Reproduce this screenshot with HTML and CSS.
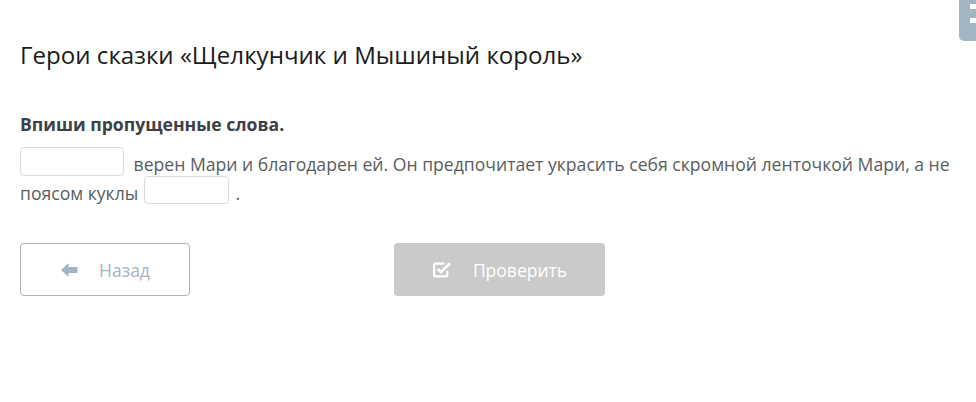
FILE: index.html
```html
<!DOCTYPE html>
<html lang="ru">
<head>
<meta charset="utf-8">
<link rel="stylesheet" href="styles.css">
</head>
<body>
<div class="side-tab"><span class="bar"></span><span class="bar"></span></div>
<main class="page">
  <h1 class="title">Герои сказки «Щелкунчик и Мышиный король»</h1>
  <p class="task">Впиши пропущенные слова.</p>
  <p class="text"><span class="gap gap-1"></span> верен Мари и благодарен ей. Он предпочитает украсить себя скромной ленточкой Мари, а не поясом куклы <span class="gap gap-2"></span> .</p>
  <div class="actions">
    <button class="btn btn-back" type="button">
      <svg class="icon" width="18" height="14" viewBox="0 0 18 14"><path d="M8 1 L1.5 7 L8 13 L8 9.5 L17 9.5 L17 4.5 L8 4.5 Z" fill="#a3b4c2" stroke="#a3b4c2" stroke-width="1" stroke-linejoin="round"/></svg>
      <span>Назад</span>
    </button>
    <button class="btn btn-check" type="button">
      <svg class="icon" width="20" height="17" viewBox="0 0 19 16"><path d="M12 2.5 H3.5 a1.5 1.5 0 0 0 -1.5 1.5 V13 a1.5 1.5 0 0 0 1.5 1.5 H13 a1.5 1.5 0 0 0 1.5 -1.5 V9.5" fill="none" stroke="#fff" stroke-width="2.2"/><path d="M5.5 7.5 L8.5 10.5 L17 2" fill="none" stroke="#fff" stroke-width="2.6"/></svg>
      <span>Проверить</span>
    </button>
  </div>
</main>
</body>
</html>
```
FILE: styles.css
```css
html, body {
  margin: 0;
  padding: 0;
  background: #fff;
}
body {
  font-family: "Open Sans", "Liberation Sans", sans-serif;
  color: #555a5e;
  position: relative;
  width: 976px;
  height: 402px;
  overflow: hidden;
}
.side-tab {
  position: absolute;
  top: 0;
  right: 0;
  width: 17px;
  height: 41px;
  background: #a2b5c2;
  border-bottom-left-radius: 5px;
}
.side-tab .bar {
  position: absolute;
  left: 11px;
  width: 6px;
  height: 5px;
  background: #fff;
}
.side-tab .bar:first-child { top: 4px; }
.side-tab .bar:last-child { top: 18px; }
.page {
  padding: 38px 20px 0 20px;
}
.title {
  margin: 0;
  font-size: 24.1px;
  font-weight: 400;
  color: #1b1b1b;
  line-height: 33px;
}
.task {
  margin: 41px 0 0 0;
  font-size: 17.6px;
  font-weight: 700;
  color: #3d4145;
  line-height: 24px;
}
.text {
  margin: 14px 0 0 0;
  font-size: 17.6px;
  line-height: 29px;
  color: #595d61;
}
.gap {
  display: inline-block;
  border: 1px solid #d6dadd;
  border-radius: 4px;
  box-sizing: border-box;
  background: #fff;
}
.gap-1 {
  width: 104px;
  height: 29px;
  margin: -4px 5px 0 0;
  vertical-align: -5px;
}
.gap-2 {
  width: 85px;
  height: 28px;
  margin: -4px 2px 0 1px;
  vertical-align: -4px;
}
.actions {
  display: flex;
  gap: 204px;
  margin-top: 35px;
}
.btn {
  display: flex;
  align-items: center;
  justify-content: center;
  gap: 21px;
  height: 53px;
  border-radius: 4px;
  font-family: "Open Sans", "Liberation Sans", sans-serif;
  font-size: 17.5px;
  box-sizing: border-box;
  padding: 0;
}
.btn-back {
  width: 170px;
  background: #fff;
  border: 1px solid #a9b1b8;
  color: #a7b4bf;
}
.btn-check {
  width: 211px;
  background: #cacaca;
  border: none;
  color: #fff;
}
.icon { display: block; }
```
